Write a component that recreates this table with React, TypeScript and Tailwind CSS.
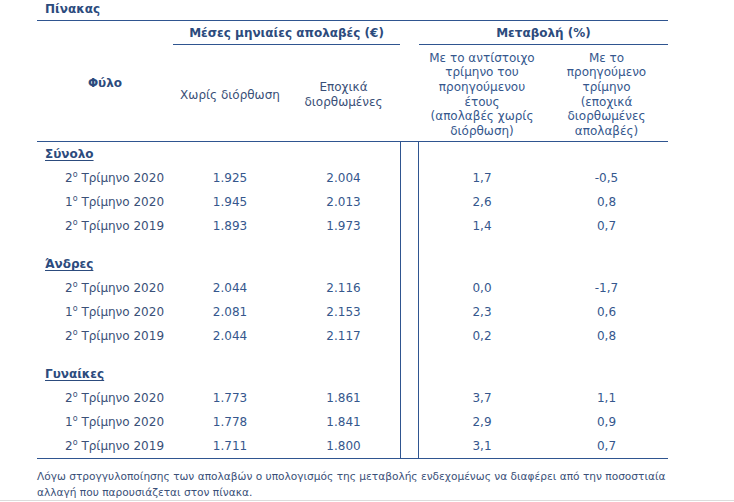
const font = { fontFamily: '"DejaVu Sans", Verdana, sans-serif' };

type Row = { label: string; n: string; a: string; b: string; c: string; d: string };
type Group = { title: string; rows: Row[] };

const groups: Group[] = [
  {
    title: 'Σύνολο',
    rows: [
      { label: 'Τρίμηνο 2020', n: '2', a: '1.925', b: '2.004', c: '1,7', d: '-0,5' },
      { label: 'Τρίμηνο 2020', n: '1', a: '1.945', b: '2.013', c: '2,6', d: '0,8' },
      { label: 'Τρίμηνο 2019', n: '2', a: '1.893', b: '1.973', c: '1,4', d: '0,7' },
    ],
  },
  {
    title: 'Άνδρες',
    rows: [
      { label: 'Τρίμηνο 2020', n: '2', a: '2.044', b: '2.116', c: '0,0', d: '-1,7' },
      { label: 'Τρίμηνο 2020', n: '1', a: '2.081', b: '2.153', c: '2,3', d: '0,6' },
      { label: 'Τρίμηνο 2019', n: '2', a: '2.044', b: '2.117', c: '0,2', d: '0,8' },
    ],
  },
  {
    title: 'Γυναίκες',
    rows: [
      { label: 'Τρίμηνο 2020', n: '2', a: '1.773', b: '1.861', c: '3,7', d: '1,1' },
      { label: 'Τρίμηνο 2020', n: '1', a: '1.778', b: '1.841', c: '2,9', d: '0,9' },
      { label: 'Τρίμηνο 2019', n: '2', a: '1.711', b: '1.800', c: '3,1', d: '0,7' },
    ],
  },
];

const cols = 'grid grid-cols-[136px_114px_113px_19px_126px_123px]';
const gap = 'border-x border-[#2f5590] h-full';

function GroupBlock({ g, last }: { g: Group; last: boolean }) {
  return (
    <>
      <div className={`${cols} h-[24px] items-center`}>
        <div className="pl-2 font-bold text-[#2c4b7d] underline underline-offset-2">{g.title}</div>
        <div />
        <div />
        <div className={gap} />
        <div />
        <div />
      </div>
      {g.rows.map((r, i) => (
        <div key={i} className={`${cols} h-[24px] items-center text-[#35578d]`}>
          <div className="pl-7 whitespace-nowrap text-[#3a5078]">
            {r.n}
            <sup className="text-[8px] -top-[5px]">o</sup> {r.label}
          </div>
          <div className="text-center">{r.a}</div>
          <div className="text-center">{r.b}</div>
          <div className={gap} />
          <div className="text-center">{r.c}</div>
          <div className="text-center">{r.d}</div>
        </div>
      ))}
      {!last && (
        <div className={`${cols} h-[14px]`}>
          <div />
          <div />
          <div />
          <div className={gap} />
          <div />
          <div />
        </div>
      )}
    </>
  );
}

export default function App() {
  return (
    <div className="w-[734px] h-[502px] bg-white relative overflow-hidden text-[12px]" style={font}>
      <div className="ml-[37px] w-[631px]">
        <div className="h-[20px] pl-2 pt-[1px] font-bold text-[#2c4b7d] leading-[16px]">Πίνακας</div>
        <div className="border-t border-[#2f5590]">
          <div className={`${cols} grid-rows-[24px_96px]`}>
            <div className="row-span-2 flex items-center justify-center font-bold text-[#2c4b7d] pt-[3px]">Φύλο</div>
            <div className="col-span-2 flex items-center justify-center font-bold text-[#2c4b7d] border-b border-[#2f5590]">
              Μέσες μηνιαίες απολαβές (€)
            </div>
            <div />
            <div className="col-span-2 flex items-center justify-center font-bold text-[#2c4b7d] border-b border-[#2f5590]">
              Μεταβολή (%)
            </div>
            <div className="flex items-center justify-center text-center text-[#3a5078] pt-[4px]">Χωρίς διόρθωση</div>
            <div className="flex items-center justify-center pt-[4px]">
              <div className="text-center text-[#3a5078] leading-[15px]">
                Εποχικά
                <br />
                διορθωμένες
              </div>
            </div>
            <div />
            <div className="flex items-center justify-center pt-[3px]">
              <div className="text-center text-[#35578d] leading-[14.6px] whitespace-nowrap">
                Με το αντίστοιχο
                <br />
                τρίμηνο του
                <br />
                προηγούμενου
                <br />
                έτους
                <br />
                (απολαβές χωρίς
                <br />
                διόρθωση)
              </div>
            </div>
            <div className="flex items-center justify-center pt-[3px]">
              <div className="text-center text-[#35578d] leading-[14.6px] whitespace-nowrap">
                Με το
                <br />
                προηγούμενο
                <br />
                τρίμηνο
                <br />
                (εποχικά
                <br />
                διορθωμένες
                <br />
                απολαβές)
              </div>
            </div>
          </div>
        </div>
        <div className="border-t border-b border-[#2f5590]">
          {groups.map((g, i) => (
            <GroupBlock key={g.title} g={g} last={i === groups.length - 1} />
          ))}
        </div>
        <p className="mt-[9px] not-italic text-[10.6px] leading-[16px] text-[#3a5078] whitespace-nowrap">
          Λόγω στρογγυλοποίησης των απολαβών ο υπολογισμός της μεταβολής ενδεχομένως να διαφέρει από την ποσοστιαία
          <br />
          αλλαγή που παρουσιάζεται στον πίνακα.
        </p>
      </div>
      <div className="absolute left-0 right-0 top-[500px] border-t border-[#dcdcdc]" />
    </div>
  );
}
